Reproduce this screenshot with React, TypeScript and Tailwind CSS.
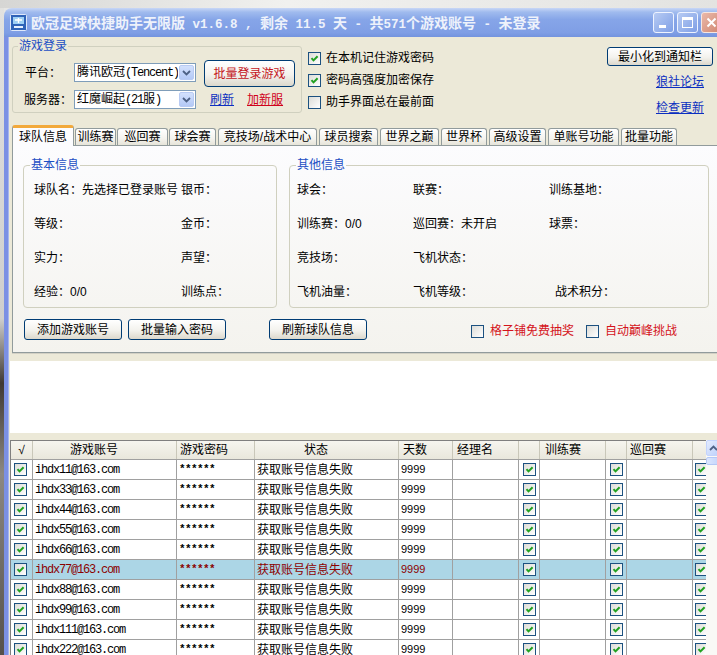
import React from 'react';

// XP style check box
function Box({ on = false }: { on?: boolean }) {
  return (
    <span className="flex h-[13px] w-[13px] shrink-0 items-center justify-center border border-[#1c5180] bg-[linear-gradient(135deg,#dcdcd7,#ffffff)]">
      {on && (
        <svg width="11" height="11" viewBox="0 0 11 11">
          <path d="M2.5 5.2 L4.5 7.4 L8.6 3.2" fill="none" stroke="#21a121" strokeWidth="2" />
        </svg>
      )}
    </span>
  );
}

function Combo({ children }: { children: React.ReactNode }) {
  return (
    <div className="flex h-[19px] w-[122px] border border-[#7f9db9] bg-white">
      <div className="flex-1 overflow-hidden whitespace-nowrap pl-[2px] leading-[17px]">{children}</div>
      <div className="m-[1px] flex w-[15px] items-center justify-center rounded-[2px] border border-[#b9cbf3] bg-[linear-gradient(#d3e1fd,#b4c9f6)]">
        <svg width="9" height="6" viewBox="0 0 9 6">
          <path d="M1 1 L4.5 4.5 L8 1" fill="none" stroke="#4d6185" strokeWidth="1.8" />
        </svg>
      </div>
    </div>
  );
}

function XpButton({ children, className = '' }: { children: React.ReactNode; className?: string }) {
  return (
    <button
      className={`flex items-center justify-center rounded-[3px] border border-[#003c74] bg-[linear-gradient(#ffffff,#f3f2ed_55%,#dcd8cc)] leading-[14px] ${className}`}
    >
      {children}
    </button>
  );
}

const tabs = [
  { label: '训练赛', cls: 'w-[41px] ml-[1px]' },
  { label: '巡回赛', cls: 'w-[51px] ml-[1px]' },
  { label: '球会赛', cls: 'w-[47px] ml-[1px]' },
  { label: '竞技场/战术中心', cls: 'w-[99px] ml-[2px]' },
  { label: '球员搜索', cls: 'w-[59px] ml-[2px]' },
  { label: '世界之巅', cls: 'w-[59px] ml-[2px]' },
  { label: '世界杯', cls: 'w-[46px] ml-[2px]' },
  { label: '高级设置', cls: 'w-[57px] ml-[2px]' },
  { label: '单账号功能', cls: 'w-[71px] ml-[2px]' },
  { label: '批量功能', cls: 'w-[56px] ml-[2px]' },
];

const accounts = ['ihdx11', 'ihdx33', 'ihdx44', 'ihdx55', 'ihdx66', 'ihdx77', 'ihdx88', 'ihdx99', 'ihdx111', 'ihdx222'];

const cols = 'grid grid-cols-[22px_144px_78px_144px_54px_66px_21px_66px_21px_66px_80px]';

export default function App() {
  return (
    <div className="flex h-[655px] w-[717px] flex-col overflow-hidden bg-[#e6e6e4] font-['Liberation_Sans','Noto_Sans_CJK_SC',sans-serif] text-[12px] text-black">
      <div className="h-[8px] shrink-0 bg-[linear-gradient(90deg,#d6d6d4,#f1f1ef_40%,#e3e3e1)]" />
      <div className="flex min-h-0 flex-1">
        <div className="w-[4px] shrink-0 bg-[linear-gradient(#e2e2e0,#cfcfcd_48%,#3f3833_58%,#8c8882_72%,#55504b)]" />

        {/* window */}
        <div className="flex w-[722px] shrink-0 flex-col">
          {/* title bar */}
          <div className="flex h-[29px] shrink-0 items-center rounded-t-[8px] bg-[linear-gradient(#c8d7f6,#a0bbee_14%,#86a5e8_40%,#7f9ee5_85%,#7393de)] pl-[6px] pr-[4px]">
            <svg width="17" height="17" viewBox="0 0 17 17">
              <rect x="0.5" y="0.5" width="16" height="16" rx="1" fill="#2f63b8" stroke="#dfe8fa" />
              <rect x="3" y="3" width="11" height="7" fill="#9fd0f4" />
              <path d="M5 6 h7 M8.5 4 v5" stroke="#ffffff" strokeWidth="1.4" />
              <rect x="4" y="12" width="9" height="2" fill="#e8f1ff" />
            </svg>
            <div className="ml-[4px] whitespace-pre pt-[2px] text-[14px] font-bold leading-[16px] text-[#eef2fb]">
              欧冠足球快捷助手无限版
              <span className="font-['Liberation_Mono',monospace] text-[12.5px]"> v1.6.8 , </span>
              剩余
              <span className="font-['Liberation_Mono',monospace] text-[12.5px]"> 11.5 </span>
              天
              <span className="font-['Liberation_Mono',monospace] text-[12.5px]"> - </span>
              共<span className="font-['Liberation_Mono',monospace] text-[12.5px]">571</span>个游戏账号
              <span className="font-['Liberation_Mono',monospace] text-[12.5px]"> - </span>
              未登录
            </div>
            <div className="ml-auto flex gap-[3px]">
              <div className="flex h-[21px] w-[21px] items-end rounded-[3px] border border-[#eef3ff] bg-[linear-gradient(135deg,#b7cbf3,#7f9fe6)] pb-[4px] pl-[5px]">
                <div className="h-[3px] w-[7px] bg-white" />
              </div>
              <div className="flex h-[21px] w-[21px] items-center justify-center rounded-[3px] border border-[#eef3ff] bg-[linear-gradient(135deg,#b7cbf3,#7f9fe6)]">
                <div className="h-[11px] w-[11px] border-[1.5px] border-t-[3px] border-white" />
              </div>
              <div className="flex h-[21px] w-[21px] items-center justify-center rounded-[3px] border border-[#f6e6e0] bg-[linear-gradient(135deg,#eab9aa,#d08670)]">
                <svg width="11" height="11" viewBox="0 0 11 11">
                  <path d="M1.5 1.5 L9.5 9.5 M9.5 1.5 L1.5 9.5" stroke="#ffffff" strokeWidth="2" />
                </svg>
              </div>
            </div>
          </div>

          <div className="flex min-h-0 flex-1">
            <div className="w-[5px] shrink-0 border-r border-[#a5b4ef] bg-[#7b90e4]" />

            {/* client area */}
            <div className="flex w-[712px] shrink-0 flex-col bg-[#ece9d8]">
              {/* top section */}
              <div className="flex h-[87px] shrink-0 pl-[3px] pt-[1px]">
                <fieldset className="h-[75px] w-[290px] rounded-[3px] border border-[#d0d0bf]">
                  <legend className="ml-[5px] px-[1px] leading-[16px] text-[#1c4fc4]">游戏登录</legend>
                  <div className="flex pt-[6px]">
                    <div className="flex flex-col gap-[8px] pl-[11px] pt-[3px]">
                      <div className="flex h-[19px] items-center">
                        <span className="w-[50px] pl-[1px]">平台：</span>
                        <Combo>
                          腾讯欧冠<span className="font-['Liberation_Mono',monospace] text-[12px] tracking-[-1.2px]">(Tencent)</span>
                        </Combo>
                      </div>
                      <div className="flex h-[19px] items-center">
                        <span className="w-[50px]">服务器：</span>
                        <Combo>
                          红魔崛起<span className="font-['Liberation_Mono',monospace] text-[12px] tracking-[-1.2px]">(21</span>服<span className="font-['Liberation_Mono',monospace] text-[12px]">)</span>
                        </Combo>
                      </div>
                    </div>
                    <div className="ml-[8px] flex flex-col">
                      <XpButton className="h-[27px] w-[91px] rounded-[4px] text-[#c4161c]">批量登录游戏</XpButton>
                      <div className="mt-[5px] flex pl-[6px] leading-[16px]">
                        <span className="text-[#0b2fc0] underline">刷新</span>
                        <span className="ml-[13px] text-[#d0021b] underline">加新服</span>
                      </div>
                    </div>
                  </div>
                </fieldset>

                <div className="ml-[6px] flex flex-col pt-[9px]">
                  <label className="flex h-[22px] items-center gap-[5px]">
                    <Box on />
                    在本机记住游戏密码
                  </label>
                  <label className="flex h-[22px] items-center gap-[5px]">
                    <Box on />
                    密码高强度加密保存
                  </label>
                  <label className="flex h-[22px] items-center gap-[5px]">
                    <Box />
                    助手界面总在最前面
                  </label>
                </div>

                <div className="ml-auto flex flex-col items-end pt-[9px]">
                  <XpButton className="mr-[8px] h-[19px] w-[106px]">最小化到通知栏</XpButton>
                  <span className="mr-[17px] mt-[8px] leading-[16px] text-[#0b2fc0] underline">狼社论坛</span>
                  <span className="mr-[17px] mt-[10px] leading-[16px] text-[#0b2fc0] underline">检查更新</span>
                </div>
              </div>

              {/* tabs */}
              <div className="flex h-[21px] shrink-0 items-end pl-[3px]">
                <div className="relative z-10 -mb-[1px] flex h-[21px] w-[62px] items-center justify-center rounded-t-[3px] border-x border-t-[3px] border-[#919b9c] border-t-[#f2a93b] bg-[#fcfcfe] leading-[14px]">
                  球队信息
                </div>
                {tabs.map((t) => (
                  <div
                    key={t.label}
                    className={`flex h-[17px] items-center justify-center whitespace-nowrap rounded-t-[3px] border border-b-0 border-[#919b9c] bg-[linear-gradient(#ffffff,#f4f3ee_60%,#e6e4d9)] leading-[14px] ${t.cls}`}
                  >
                    {t.label}
                  </div>
                ))}
              </div>

              {/* tab panel */}
              <div className="ml-[3px] w-[708px] shrink-0 border border-[#919b9c] bg-[linear-gradient(#fcfcfe,#f4f3ee)] pb-[12px] pl-[10px] pt-[11px] shadow-[0_1px_0_#d2d0c4]">
                <div className="flex">
                  <fieldset className="w-[254px] rounded-[4px] border border-[#d0d0bf] pb-[5px]">
                    <legend className="ml-[6px] px-[1px] leading-[16px] text-[#1c4fc4]">基本信息</legend>
                    <div className="grid grid-cols-[147px_1fr] gap-y-[14px] pl-[10px] pt-[7px] [&>div]:h-[20px] [&>div]:leading-[20px]">
                      <div className="whitespace-nowrap">球队名：先选择已登录账号</div>
                      <div>银币：</div>
                      <div>等级：</div>
                      <div>金币：</div>
                      <div>实力：</div>
                      <div>声望：</div>
                      <div>经验：0/0</div>
                      <div>训练点：</div>
                    </div>
                  </fieldset>
                  <fieldset className="ml-[12px] w-[420px] rounded-[4px] border border-[#d0d0bf] pb-[5px]">
                    <legend className="ml-[6px] px-[1px] leading-[16px] text-[#1c4fc4]">其他信息</legend>
                    <div className="grid grid-cols-[116px_136px_1fr] gap-y-[14px] pl-[7px] pt-[7px] [&>div]:h-[20px] [&>div]:leading-[20px]">
                      <div>球会：</div>
                      <div>联赛：</div>
                      <div>训练基地：</div>
                      <div>训练赛：0/0</div>
                      <div>巡回赛：未开启</div>
                      <div>球票：</div>
                      <div>竞技场：</div>
                      <div>飞机状态：</div>
                      <div />
                      <div>飞机油量：</div>
                      <div>飞机等级：</div>
                      <div className="pl-[6px]">战术积分：</div>
                    </div>
                  </fieldset>
                </div>

                <div className="mt-[11px] flex items-center pl-[1px]">
                  <XpButton className="h-[21px] w-[98px]">添加游戏账号</XpButton>
                  <XpButton className="ml-[6px] h-[21px] w-[98px]">批量输入密码</XpButton>
                  <XpButton className="ml-[43px] h-[21px] w-[98px]">刷新球队信息</XpButton>
                  <label className="ml-[104px] mt-[3px] flex items-center gap-[6px] text-[#d4131b]">
                    <Box />
                    格子铺免费抽奖
                  </label>
                  <label className="ml-[12px] mt-[3px] flex items-center gap-[6px] text-[#d4131b]">
                    <Box />
                    自动巅峰挑战
                  </label>
                </div>
              </div>

              {/* log box */}
              <div className="ml-[1px] mt-[8px] h-[72px] shrink-0 bg-white" />

              {/* account grid */}
              <div className="ml-[1px] mt-[7px] flex min-h-0 flex-1">
                <div className="min-w-0 flex-1 overflow-hidden border-l border-t border-[#7f7f7f]">
                  <div className={`${cols} h-[19px] border-b border-[#a0a0a0] bg-[linear-gradient(#f6f5ef,#e9e7dc)] leading-[18px] [&>div]:border-r [&>div]:border-[#c9c7b9]`}>
                    <div className="text-center">√</div>
                    <div className="pl-[37px]">游戏账号</div>
                    <div className="pl-[3px]">游戏密码</div>
                    <div className="pl-[49px]">状态</div>
                    <div className="pl-[4px]">天数</div>
                    <div className="pl-[4px]">经理名</div>
                    <div />
                    <div className="pl-[5px]">训练赛</div>
                    <div />
                    <div className="pl-[3px]">巡回赛</div>
                    <div />
                  </div>
                  {accounts.map((a) => {
                    const sel = a === 'ihdx77';
                    return (
                      <div
                        key={a}
                        className={`${cols} h-[20px] border-b border-[#a0a0a0] ${sel ? 'bg-[#acd6e6] text-[#8b0000]' : 'bg-white'} [&>div]:flex [&>div]:items-center [&>div]:border-r [&>div]:border-[#a0a0a0]`}
                      >
                        <div className="justify-center pr-[2px]">
                          <Box on />
                        </div>
                        <div className="pl-[2px] font-['Liberation_Mono',monospace] text-[12px] tracking-[-1.2px]">{a}@163.com</div>
                        <div className="pl-[2px] font-['Liberation_Mono',monospace] text-[11px] font-bold tracking-[-0.6px]">******</div>
                        <div className="pl-[2px]">获取账号信息失败</div>
                        <div className="pl-[2px] text-[11px]">9999</div>
                        <div />
                        <div className="justify-center">
                          <Box on />
                        </div>
                        <div />
                        <div className="justify-center">
                          <Box on />
                        </div>
                        <div />
                        <div className="pl-[2px]">
                          <Box on />
                        </div>
                      </div>
                    );
                  })}
                </div>

                {/* vertical scrollbar */}
                <div className="flex w-[15px] shrink-0 flex-col bg-[#f9f9f6]">
                  <div className="flex h-[16px] items-center justify-center rounded-[2px] border border-[#c3d3fd] bg-[linear-gradient(135deg,#e3ebfe,#bcd0fb)]">
                    <svg width="9" height="6" viewBox="0 0 9 6">
                      <path d="M1 5 L4.5 1.5 L8 5" fill="none" stroke="#4d6185" strokeWidth="1.8" />
                    </svg>
                  </div>
                  <div className="mt-[1px] h-[8px] rounded-[2px] border border-[#b4c8f6] bg-[linear-gradient(90deg,#dbe6fe,#c1d3fb)]" />
                </div>
              </div>
            </div>

            <div className="w-[5px] shrink-0 bg-[#7b90e4]" />
          </div>
        </div>
      </div>
    </div>
  );
}
